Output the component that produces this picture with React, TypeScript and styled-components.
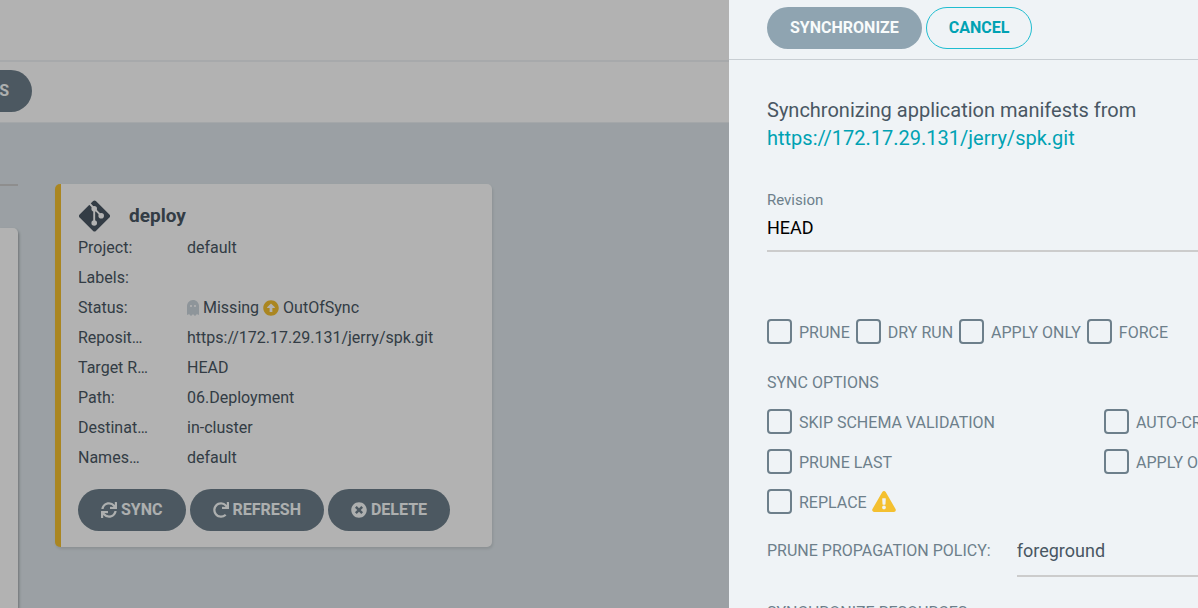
import React from "react";
import styled, { createGlobalStyle } from "styled-components";
import {
  FaArrowAltCircleUp,
  FaExclamationTriangle,
  FaGhost,
  FaRedo,
  FaSync,
  FaTimesCircle,
} from "react-icons/fa";

const GlobalStyle = createGlobalStyle`
  *, *::before, *::after { box-sizing: border-box; }
  body {
    margin: 0;
    overflow: hidden;
    background: #dee6eb;
    color: #495763;
    font: 16px/30px Roboto, "Liberation Sans", sans-serif;
  }
  button, input, select { font-family: inherit; }
`;

const Page = styled.div`
  display: flex;
  flex-direction: column;
  min-height: 100vh;
`;

const TopBar = styled.header`
  height: 62px;
  flex: none;
  background: #fff;
  border-bottom: 2px solid #eff3f5;
`;

const Toolbar = styled.div`
  display: flex;
  align-items: center;
  height: 61px;
  flex: none;
  padding-bottom: 2px;
  background: #fff;
  border-bottom: 1px solid #ebeff2;
`;

const ToolbarEnd = styled.div`
  display: flex;
  justify-content: flex-end;
  width: 32px;
`;

const Button = styled.button<{ $tone?: "solid" | "muted" | "outline" }>`
  display: inline-flex;
  align-items: center;
  gap: 4px;
  flex: none;
  height: 42px;
  padding: 0 ${(p) => (p.$tone === "outline" ? 22 : 23)}px;
  border: ${(p) => (p.$tone === "outline" ? "1px solid #1fbdd0" : "0")};
  border-radius: 21px;
  background: ${(p) =>
    p.$tone === "outline" ? "transparent" : p.$tone === "muted" ? "#8fa4b1" : "#6d7f8b"};
  color: ${(p) => (p.$tone === "outline" ? "#00a2b3" : "#f8fbfb")};
  font-size: 16px;
  font-weight: 700;
  line-height: 20px;
  text-transform: uppercase;
  white-space: nowrap;
`;

const Content = styled.main`
  display: flex;
  flex: 1;
  gap: 37px;
  padding-top: 61px;
`;

const Filters = styled.aside`
  display: flex;
  flex-direction: column;
  width: 18px;
  flex: none;
`;

const FilterRule = styled.hr`
  width: 100%;
  margin: 0 0 42px;
  border: 0;
  border-top: 2px solid #ccc;
`;

const FilterBox = styled.div`
  flex: 1;
  background: #fff;
  border-radius: 0 5px 0 0;
  box-shadow: 1px 2px 3px rgba(0, 0, 0, 0.3);
`;

const Tile = styled.article`
  align-self: flex-start;
  width: 437px;
  padding: 16px 17px;
  background: #fff;
  border-left: 6px solid #f4c030;
  border-radius: 5px;
  box-shadow: 1px 2px 3px rgba(0, 0, 0, 0.1);
`;

const TileTitle = styled.h2`
  display: flex;
  align-items: center;
  gap: 18px;
  height: 32px;
  margin: 0;
  font-size: 19px;
  font-weight: 700;
`;

const Fields = styled.dl`
  display: grid;
  grid-template-columns: 70px 1fr;
  column-gap: 39px;
  margin: 0;
  padding-top: 1px;
`;

const FieldName = styled.dt`
  overflow: hidden;
  text-overflow: ellipsis;
  white-space: nowrap;
`;

const FieldValue = styled.dd`
  display: flex;
  align-items: center;
  gap: 4px;
  height: 30px;
  margin: 0;
`;

const GhostIcon = styled(FaGhost)`
  width: 12px;
  height: 16px;
  color: #ccd6dd;
`;

const WarningIcon = styled(FaExclamationTriangle)`
  width: 24px;
  height: 21px;
  margin-bottom: 4px;
  color: #f4c030;
`;

const TileActions = styled.div`
  display: flex;
  gap: 4px;
  padding-top: 16px;
`;

const Overlay = styled.div`
  position: fixed;
  inset: 0;
  display: flex;
  justify-content: flex-end;
  background: rgba(0, 0, 0, 0.3);
`;

const Panel = styled.section`
  width: 469px;
  height: 100%;
  overflow: hidden;
  background: #eff3f6;
  color: #6d7f8b;
`;

const PanelHeader = styled.header`
  display: flex;
  gap: 4px;
  height: 60px;
  padding: 7px 38px 0;
  border-bottom: 1px solid #c8ced3;
`;

const PanelBody = styled.form`
  padding: 36px 0 0 38px;
  white-space: nowrap;
`;

const Source = styled.p`
  margin: 0 0 34px;
  color: #495763;
  font-size: 20px;
  line-height: 28px;
`;

const SourceLink = styled.a`
  display: block;
  width: max-content;
  color: #00a2b3;
  text-decoration: none;
`;

const RevisionLabel = styled.label`
  display: block;
  font-size: 15px;
  line-height: 28px;
`;

const RevisionInput = styled.input`
  display: block;
  width: 100%;
  height: 38px;
  margin-bottom: 60px;
  padding: 0 0 10px;
  border: 0;
  border-bottom: 2px solid #ccc;
  border-radius: 0;
  outline: 0;
  background: transparent;
  color: #000;
  font-size: 18px;
`;

const FlagRow = styled.div`
  display: flex;
  gap: 6px;
  height: 40px;
`;

const OptionGrid = styled.div`
  display: grid;
  grid-template-columns: 337px max-content;
  grid-auto-rows: 40px;
`;

const Check = styled.label`
  display: flex;
  align-items: center;
  gap: 7px;
  padding-bottom: 1px;
  text-transform: uppercase;
`;

const CheckBox = styled.input`
  appearance: none;
  width: 25px;
  height: 25px;
  flex: none;
  margin: 0;
  border: 2px solid #6d7f8b;
  border-radius: 4px;
`;

const CheckText = styled.span`
  display: inline-flex;
  align-items: center;
  gap: 5px;
  padding-top: 3px;
`;

const SectionTitle = styled.h3<{ $spaced?: boolean }>`
  margin: 0;
  padding-top: ${(p) => (p.$spaced ? 17 : 12)}px;
  font-size: 16px;
  font-weight: 400;
  line-height: 38px;
  text-transform: uppercase;
`;

const PolicyRow = styled.div`
  display: flex;
  gap: 26px;
  padding-top: 13px;
`;

const PolicyLabel = styled.label`
  line-height: 32px;
  text-transform: uppercase;
`;

const PolicySelect = styled.select`
  appearance: none;
  flex: 1;
  height: 42px;
  padding: 0 0 10px;
  border: 0;
  border-bottom: 2px solid #ccc;
  border-radius: 0;
  outline: 0;
  background: transparent;
  color: #495763;
  font-size: 18px;
`;

const GitLogo = () => (
  <svg width="33" height="32" viewBox="0 0 32 32" aria-hidden="true">
    <path
      fill="#495763"
      d="M14.6 1.1a2 2 0 0 1 2.800 0l13.5 13.5a2 2 0 0 1 0 2.800L17.400 30.900a2 2 0 0 1-2.800 0L1.100 17.400a2 2 0 0 1 0-2.800z"
    />
    <path d="M11 3.500 15.700 8.600V23M15.700 8.600l7 7" fill="none" stroke="#fff" strokeWidth="1.900" />
    <circle cx="15.700" cy="8.800" r="2.800" fill="#fff" />
    <circle cx="22.700" cy="15.800" r="2.800" fill="#fff" />
    <circle cx="15.700" cy="23" r="2.800" fill="#fff" />
  </svg>
);

const repo = "https://172.17.29.131/jerry/spk.git";

const fields: [string, React.ReactNode][] = [
  ["Project:", "default"],
  ["Labels:", ""],
  [
    "Status:",
    <>
      <GhostIcon />
      Missing
      <FaArrowAltCircleUp size={16} color="#f4c030" />
      OutOfSync
    </>,
  ],
  ["Repository:", repo],
  ["Target Revision:", "HEAD"],
  ["Path:", "06.Deployment"],
  ["Destination:", "in-cluster"],
  ["Namespace:", "default"],
];

const flags = ["Prune", "Dry run", "Apply only", "Force"];
const options = [
  "Skip schema validation",
  "Auto-create namespace",
  "Prune last",
  "Apply out of sync only",
  "Replace",
];

const Option = ({ name }: { name: string }) => (
  <Check>
    <CheckBox type="checkbox" />
    <CheckText>
      {name}
      {name === "Replace" && <WarningIcon />}
    </CheckText>
  </Check>
);

export default function App() {
  return (
    <>
      <GlobalStyle />
      <Page>
        <TopBar />
        <Toolbar>
          <ToolbarEnd>
            <Button type="button">Refresh apps</Button>
          </ToolbarEnd>
        </Toolbar>
        <Content>
          <Filters>
            <FilterRule />
            <FilterBox />
          </Filters>
          <Tile>
            <TileTitle>
              <GitLogo />
              deploy
            </TileTitle>
            <Fields>
              {fields.map(([name, value]) => (
                <React.Fragment key={name}>
                  <FieldName>{name}</FieldName>
                  <FieldValue>{value}</FieldValue>
                </React.Fragment>
              ))}
            </Fields>
            <TileActions>
              <Button type="button">
                <FaSync size={16} />
                Sync
              </Button>
              <Button type="button">
                <FaRedo size={16} />
                Refresh
              </Button>
              <Button type="button">
                <FaTimesCircle size={16} />
                Delete
              </Button>
            </TileActions>
          </Tile>
        </Content>
      </Page>
      <Overlay>
        <Panel>
          <PanelHeader>
            <Button type="button" $tone="muted">
              Synchronize
            </Button>
            <Button type="button" $tone="outline">
              Cancel
            </Button>
          </PanelHeader>
          <PanelBody>
            <Source>
              Synchronizing application manifests from
              <SourceLink href={repo}>{repo}</SourceLink>
            </Source>
            <RevisionLabel htmlFor="revision">Revision</RevisionLabel>
            <RevisionInput id="revision" defaultValue="HEAD" />
            <FlagRow>
              {flags.map((name) => (
                <Option key={name} name={name} />
              ))}
            </FlagRow>
            <SectionTitle>Sync options</SectionTitle>
            <OptionGrid>
              {options.map((name) => (
                <Option key={name} name={name} />
              ))}
            </OptionGrid>
            <PolicyRow>
              <PolicyLabel htmlFor="policy">Prune propagation policy:</PolicyLabel>
              <PolicySelect id="policy" defaultValue="foreground">
                <option>foreground</option>
                <option>background</option>
                <option>orphan</option>
              </PolicySelect>
            </PolicyRow>
            <SectionTitle $spaced>Synchronize resources</SectionTitle>
          </PanelBody>
        </Panel>
      </Overlay>
    </>
  );
}
